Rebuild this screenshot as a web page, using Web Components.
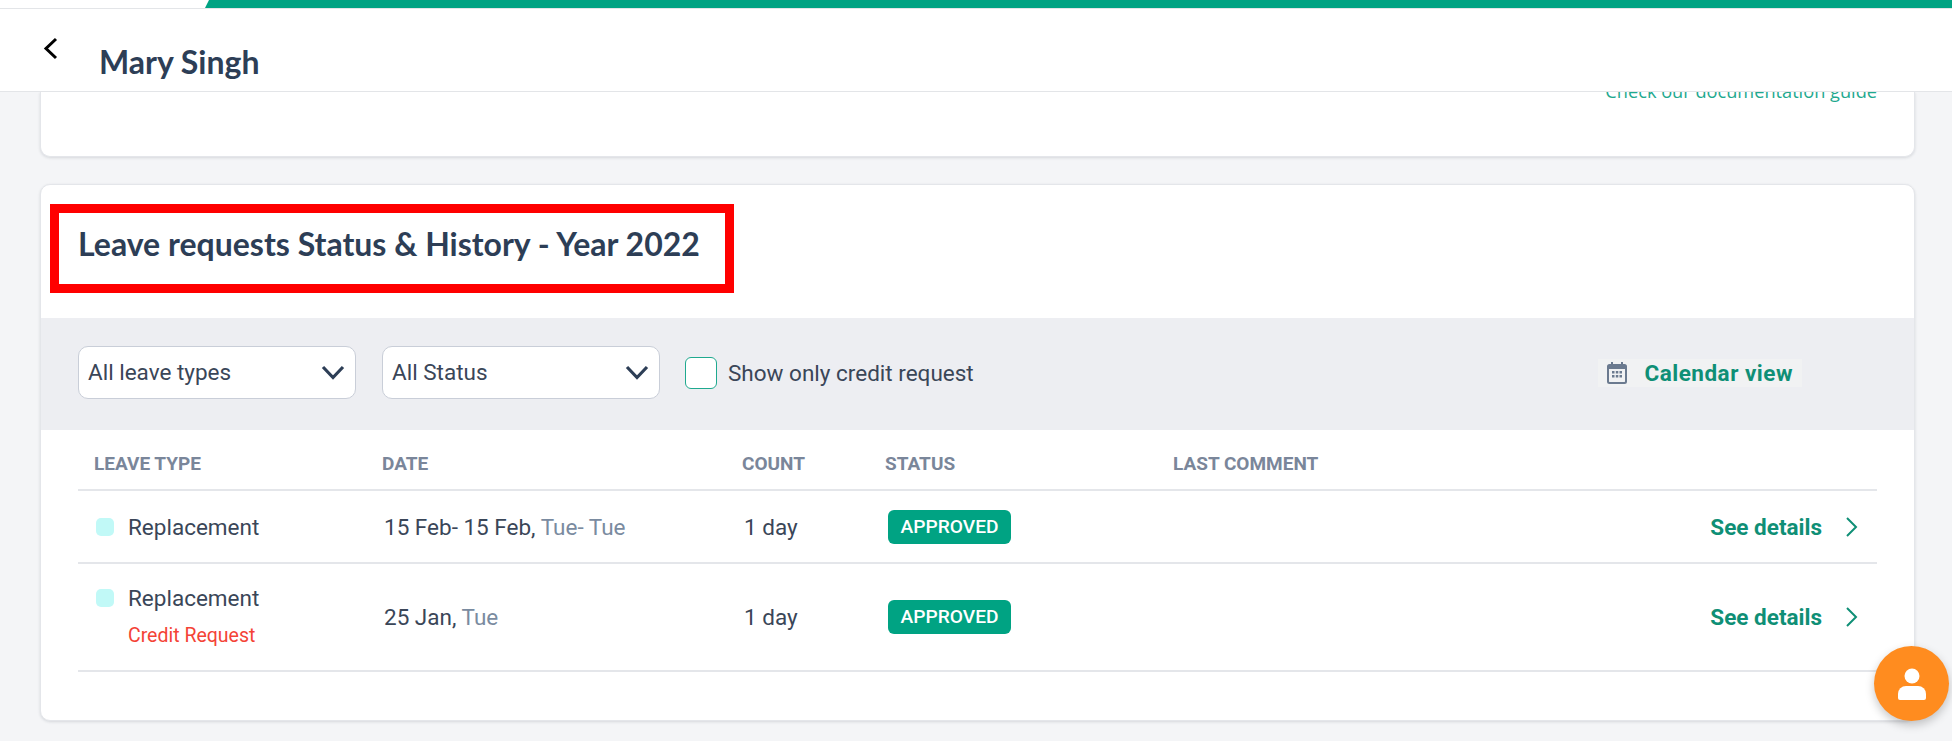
<!DOCTYPE html>
<html>
<head>
<meta charset="utf-8">
<title>Mary Singh</title>
<style>
  html, body { margin: 0; height: 100%; }
  body { background: #f4f5f7; font-family: Roboto, "Liberation Sans", sans-serif; overflow: hidden; }
</style>
</head>
<body>
<hr-page>
  <top-progress></top-progress>
  <page-header>Mary Singh</page-header>
  <hr-content>
    <doc-card>Check our documentation guide</doc-card>
    <leave-history heading="Leave requests Status &amp; History - Year 2022">
      <filter-bar slot="filters">
        <filter-select>All leave types</filter-select>
        <filter-select>All Status</filter-select>
        <credit-check>Show only credit request</credit-check>
        <calendar-link slot="end">Calendar view</calendar-link>
      </filter-bar>
      <leave-row leave="Replacement" date="15 Feb- 15 Feb" day="Tue- Tue" count="1 day"></leave-row>
      <leave-row leave="Replacement" credit date="25 Jan" day="Tue" count="1 day"></leave-row>
    </leave-history>
  </hr-content>
  <help-fab></help-fab>
</hr-page>

<script>
const COLUMNS = "304px 360px 143px 288px 1fr";

class HrPage extends HTMLElement {
    constructor() {
        super();
        this.attachShadow({ mode: "open" }).innerHTML = `<style>
            :host { display: flex; flex-direction: column; height: 741px; position: relative; overflow: hidden; }
        </style><slot></slot>`;
    }
}

class TopProgress extends HTMLElement {
    constructor() {
        super();
        this.attachShadow({ mode: "open" }).innerHTML = `<style>
            :host { display: block; height: 8px; background: #fff; border-bottom: 1px solid #e3e5e8; flex: none; }
            .fill { height: 8px; margin-left: 205px; background: #00a383; clip-path: polygon(4px 0, 100% 0, 100% 100%, 0 100%); }
        </style><div class="fill"></div>`;
    }
}

class PageHeader extends HTMLElement {
    constructor() {
        super();
        this.attachShadow({ mode: "open" }).innerHTML = `<style>
            :host { display: flex; height: 82px; background: #fff; border-bottom: 1px solid #e3e5e8; flex: none; padding-left: 43px; position: relative; z-index: 1; }
            svg { margin-top: 28px; width: 16px; height: 24px; flex: none; }
            h1 { margin: 33px 0 0 40px; font: 700 32px/40px Lato, sans-serif; color: #2d3e56; }
        </style>
        <svg viewBox="0 0 16 24" fill="none" stroke="#000" stroke-width="3"><path d="M13 2 3 11.5 13 21"/></svg>
        <h1><slot></slot></h1>`;
    }
}

class HrContent extends HTMLElement {
    constructor() {
        super();
        this.attachShadow({ mode: "open" }).innerHTML = `<style>
            :host { display: flex; flex-direction: column; gap: 27px; padding: 0 37px 0 40px; flex: 1; min-height: 0; overflow: hidden; }
        </style><slot></slot>`;
    }
}

class DocCard extends HTMLElement {
    constructor() {
        super();
        this.attachShadow({ mode: "open" }).innerHTML = `<style>
            :host { display: flex; justify-content: flex-end; box-sizing: border-box; height: 65px; background: #fff; border: 1px solid #e4e6ea; border-top: 0; border-radius: 0 0 10px 10px; box-shadow: 0 1px 3px rgba(30,40,60,.14); flex: none; overflow: hidden; padding-right: 37px; }
            a { font: 400 18.2px/24px "Open Sans", sans-serif; color: #1fa98f; margin-top: -13px; height: 24px; }
        </style><a><slot></slot></a>`;
    }
}

class LeaveHistory extends HTMLElement {
    constructor() {
        super();
        this.attachShadow({ mode: "open" }).innerHTML = `<style>
            :host { display: block; box-sizing: border-box; height: 537px; background: #fff; border: 1px solid #e4e6ea; border-radius: 10px; box-shadow: 0 1px 3px rgba(30,40,60,.14); position: relative; flex: none; overflow: hidden; }
            h2 { margin: 0; height: 133px; box-sizing: border-box; padding: 37px 0 0 37px; font: 700 32px/44px Lato, sans-serif; color: #2d3e56; }
            .mark { position: absolute; left: 9px; top: 19px; width: 684px; height: 89px; box-sizing: border-box; border: 9px solid #f00; }
            .table { margin: 0 37px; }
            .head { display: grid; grid-template-columns: ${COLUMNS}; height: 61px; align-items: center; border-bottom: 2px solid #e4e6ea; box-sizing: border-box; padding-top: 8px; font: 700 19px/24px Roboto, sans-serif; color: #7a869a; }
            .head span:first-child { padding-left: 16px; }
        </style>
        <h2></h2>
        <slot name="filters"></slot>
        <div class="table">
            <div class="head"><span>LEAVE TYPE</span><span>DATE</span><span>COUNT</span><span>STATUS</span><span>LAST COMMENT</span></div>
            <slot></slot>
        </div>
        <div class="mark"></div>`;
    }

    connectedCallback() {
        this.shadowRoot.querySelector("h2").textContent = this.getAttribute("heading");
    }
}

class FilterBar extends HTMLElement {
    constructor() {
        super();
        this.attachShadow({ mode: "open" }).innerHTML = `<style>
            :host { display: flex; align-items: center; box-sizing: border-box; height: 112px; background: #edeef2; padding: 0 112px 3px 37px; }
            .left { display: flex; align-items: center; gap: 26px; }
            .end { margin-left: auto; }
        </style>
        <div class="left"><slot></slot></div>
        <div class="end"><slot name="end"></slot></div>`;
    }
}

class FilterSelect extends HTMLElement {
    constructor() {
        super();
        this.attachShadow({ mode: "open" }).innerHTML = `<style>
            :host { display: flex; align-items: center; justify-content: space-between; box-sizing: border-box; width: 278px; height: 53px; padding: 0 10px 0 9px; background: #fff; border: 1px solid #c9ced8; border-radius: 10px; font: 400 22.5px/26px Roboto, sans-serif; color: #3a4658; }
            span { margin-top: -2px; }
            svg { width: 24px; height: 15px; }
        </style>
        <span><slot></slot></span>
        <svg viewBox="0 0 24 15" fill="none" stroke="#2d3e56" stroke-width="3.2"><path d="M2 2l10 10.5L22 2"/></svg>`;
    }
}

class CreditCheck extends HTMLElement {
    constructor() {
        super();
        this.attachShadow({ mode: "open" }).innerHTML = `<style>
            :host { display: flex; align-items: center; gap: 11px; margin-left: -1px; font: 400 22.5px/26px Roboto, sans-serif; color: #3a4658; }
            i { display: block; box-sizing: border-box; width: 32px; height: 32px; background: #fff; border: 1.5px solid #1fa98f; border-radius: 6px; }
        </style><i></i><span><slot></slot></span>`;
    }
}

class CalendarLink extends HTMLElement {
    constructor() {
        super();
        this.attachShadow({ mode: "open" }).innerHTML = `<style>
            :host { display: flex; align-items: center; gap: 17px; height: 28px; padding: 0 9px; background: #f1f2f3; font: 700 22.5px/28px Roboto, sans-serif; color: #0f8f76; letter-spacing: .5px; }
            svg { width: 20px; height: 22px; flex: none; }
        </style>
        <svg viewBox="0 0 20 22"><path fill="#6b7a8f" d="M4 0h2v2h8V0h2v2h1.500A2.500 2.500 0 0 1 20 4.500v15a2.500 2.500 0 0 1-2.500 2.500h-15A2.500 2.500 0 0 1 0 19.500v-15A2.500 2.500 0 0 1 2.500 2H4zM2 7v12.500c0 .3.2.500.5.500h15c.3 0 .5-.2.5-.500V7z"/><path fill="#6b7a8f" d="M5 9h2.500v2.500H5zM8.800 9h2.500v2.500H8.800zM12.500 9H15v2.500h-2.500zM5 13h2.500v2.500H5zM8.800 13h2.500v2.500H8.800zM12.500 13H15v2.500h-2.500z"/></svg>
        <span><slot></slot></span>`;
    }
}

class StatusBadge extends HTMLElement {
    constructor() {
        super();
        this.attachShadow({ mode: "open" }).innerHTML = `<style>
            :host { display: inline-flex; align-items: center; justify-content: center; width: 123px; height: 34px; background: #00a383; border-radius: 6px; color: #fff; font: 500 19.2px/24px Roboto, sans-serif; }
        </style><slot></slot>`;
    }
}

class LeaveRow extends HTMLElement {
    constructor() {
        super();
        this.attachShadow({ mode: "open" }).innerHTML = `<style>
            :host { display: grid; grid-template-columns: ${COLUMNS}; align-items: center; box-sizing: border-box; border-bottom: 2px solid #e4e6ea; font: 400 22.5px/30px Roboto, sans-serif; color: #3a4658; }
            :host([credit]) { height: 108px; }
            :host(:not([credit])) { height: 73px; }
            .type { display: grid; grid-template-columns: 18px 1fr; column-gap: 14px; padding-left: 18px; align-items: center; }
            :host([credit]) .type { margin-top: -4px; }
            .dot { width: 18px; height: 18px; border-radius: 5px; background: #c1f9f7; }
            .credit { grid-column: 2; font-size: 19.500px; line-height: 24px; color: #f44336; margin-top: 11px; display: none; }
            :host([credit]) .credit { display: block; }
            .cell { padding-left: 2px; }
            .badge { padding-left: 3px; }
            .day { color: #7a8ba0; }
            .more { display: flex; justify-content: flex-end; align-items: center; gap: 24px; padding-right: 19px; font-weight: 700; color: #0f8f76; }
            svg { width: 12px; height: 20px; }
        </style>
        <div class="type"><i class="dot"></i><span class="name"></span><span class="credit">Credit Request</span></div>
        <div class="cell"><span class="date"></span>, <span class="day"></span></div>
        <div class="cell count"></div>
        <div class="badge"><status-badge>APPROVED</status-badge></div>
        <div class="more"><span>See details</span><svg viewBox="0 0 12 20" fill="none" stroke="#0f8f76" stroke-width="2"><path d="M1 1l9 9-9 9"/></svg></div>`;
    }

    connectedCallback() {
        this.$(".name").textContent = this.getAttribute("leave");
        this.$(".date").textContent = this.getAttribute("date");
        this.$(".day").textContent = this.getAttribute("day");
        this.$(".count").textContent = this.getAttribute("count");
    }

    $(selector) {
        return this.shadowRoot.querySelector(selector);
    }
}

class HelpFab extends HTMLElement {
    constructor() {
        super();
        this.attachShadow({ mode: "open" }).innerHTML = `<style>
            :host { position: absolute; left: 1874px; top: 646px; width: 75px; height: 75px; border-radius: 50%; background: #ff8c1f; box-shadow: 0 4px 10px rgba(0,0,0,.22); display: flex; align-items: center; justify-content: center; z-index: 2; }
            svg { width: 28px; height: 32px; }
        </style>
        <svg viewBox="0 0 28 32" fill="#fff"><circle cx="14" cy="8" r="7.500"/><path d="M8 18h12a8 8 0 0 1 8 8v4a2 2 0 0 1-2 2H2a2 2 0 0 1-2-2v-4a8 8 0 0 1 8-8z"/></svg>`;
    }
}

customElements.define("hr-page", HrPage);
customElements.define("top-progress", TopProgress);
customElements.define("page-header", PageHeader);
customElements.define("hr-content", HrContent);
customElements.define("doc-card", DocCard);
customElements.define("leave-history", LeaveHistory);
customElements.define("filter-bar", FilterBar);
customElements.define("filter-select", FilterSelect);
customElements.define("credit-check", CreditCheck);
customElements.define("calendar-link", CalendarLink);
customElements.define("status-badge", StatusBadge);
customElements.define("leave-row", LeaveRow);
customElements.define("help-fab", HelpFab);
</script>
</body>
</html>
